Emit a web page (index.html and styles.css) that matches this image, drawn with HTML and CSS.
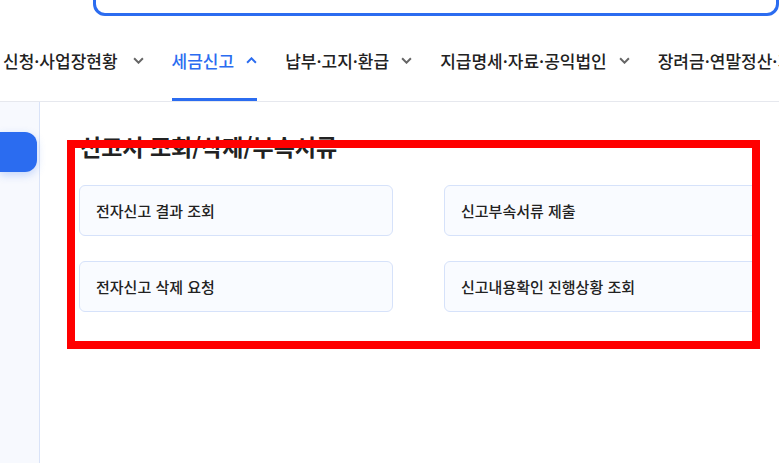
FILE: index.html
```html
<!DOCTYPE html>
<html lang="ko">
  <head>
    <meta charset="UTF-8" />
    <meta name="viewport" content="width=device-width, initial-scale=1.0" />
    <title>세금신고</title>
    <link rel="stylesheet" href="styles.css">
  </head>
  <body>
    <div class="header">
      <div class="search-box"></div>
    </div>

    <nav class="gnb">
      <div class="gnb-item first">
        <span>신청·사업장현황</span>
        <svg class="chev" viewBox="0 0 10 6"><path d="M1 1l4 4 4-4" /></svg>
      </div>
      <div class="gnb-item active">
        <span>세금신고</span>
        <svg class="chev" viewBox="0 0 10 6"><path d="M1 5l4-4 4 4" /></svg>
      </div>
      <div class="gnb-item">
        <span>납부·고지·환급</span>
        <svg class="chev" viewBox="0 0 10 6"><path d="M1 1l4 4 4-4" /></svg>
      </div>
      <div class="gnb-item">
        <span>지급명세·자료·공익법인</span>
        <svg class="chev" viewBox="0 0 10 6"><path d="M1 1l4 4 4-4" /></svg>
      </div>
      <div class="gnb-item">
        <span>장려금·연말정산·기부금</span>
        <svg class="chev" viewBox="0 0 10 6"><path d="M1 1l4 4 4-4" /></svg>
      </div>
    </nav>

    <div class="page">
      <aside class="side">
        <div class="side-btn"></div>
      </aside>

      <main class="content">
        <h2 class="title">신고서 조회/삭제/부속서류</h2>
        <div class="menu-grid">
          <div class="menu-card">전자신고 결과 조회</div>
          <div class="menu-card">신고부속서류 제출</div>
          <div class="menu-card">전자신고 삭제 요청</div>
          <div class="menu-card">신고내용확인 진행상황 조회</div>
        </div>
      </main>

      <!-- annotation box over the menu -->
      <div class="highlight"></div>
    </div>
  </body>
</html>
```

FILE: styles.css
```css
* {
  margin: 0;
  padding: 0;
  box-sizing: border-box;
}

body {
  font-family: "Noto Sans CJK KR", "Noto Sans", sans-serif;
  background-color: #fff;
  color: #222;
  width: 779px;
  height: 463px;
  overflow: hidden;
}

.header {
  height: 16px;
  overflow: hidden;
  display: flex;
  align-items: flex-end;
  padding-left: 93px;
}

.search-box {
  flex: 0 0 auto;
  width: 686px;
  height: 50px;
  border: 3px solid #2b6cf0;
  border-radius: 12px;
}

.gnb {
  display: flex;
  gap: 28px;
  height: 86px;
  padding-left: 3px;
  border-bottom: 1px solid #e6e8ee;
  white-space: nowrap;
  overflow: hidden;
}

.gnb-item {
  display: flex;
  align-items: center;
  gap: 12px;
  font-size: 17px;
  font-weight: 500;
  color: #222;
  padding-top: 6px;
  border-bottom: 3px solid transparent;
  flex-shrink: 0;
}

.gnb-item.first {
  gap: 15px;
}

.gnb-item .chev {
  width: 11px;
  height: 7px;
  fill: none;
  stroke: #666;
  stroke-width: 1.8;
}

.gnb-item.active {
  color: #2b6cf0;
  border-bottom-color: #2b6cf0;
}

.gnb-item.active .chev {
  stroke: #2b6cf0;
}

.page {
  position: relative;
  display: flex;
  height: 361px;
}

.side {
  width: 40px;
  background-color: #f7f9fe;
  border-right: 1px solid #d9e3f8;
  padding-top: 30px;
}

.side-btn {
  width: 37px;
  height: 40px;
  background-color: #2b6cf0;
  border-radius: 0 12px 12px 0;
  box-shadow: 0 3px 8px rgba(43, 108, 240, 0.25);
}

.content {
  flex: 1;
  padding: 28px 0 0 39px;
}

.title {
  font-size: 23px;
  font-weight: 700;
  line-height: 32px;
  color: #222;
  padding-left: 1px;
}

.menu-grid {
  display: grid;
  grid-template-columns: 314px 314px;
  column-gap: 51px;
  row-gap: 25px;
  margin-top: 23px;
}

.menu-card {
  height: 51px;
  display: flex;
  align-items: center;
  padding-left: 16px;
  font-size: 15px;
  font-weight: 500;
  background-color: #f9fbff;
  border: 1px solid #d6e2fa;
  border-radius: 6px;
}

.highlight {
  position: absolute;
  left: 67px;
  top: 38px;
  width: 693px;
  height: 209px;
  border: 8px solid #ff0000;
}
```
